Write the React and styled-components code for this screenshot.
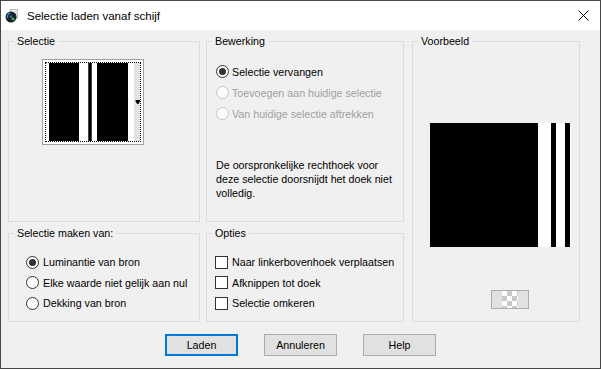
import React from 'react';
import styled, { createGlobalStyle } from 'styled-components';

const GlobalStyle = createGlobalStyle`
  body {
    margin: 0;
    font-family: "Liberation Sans", Arial, sans-serif;
    font-size: 10.7px;
    color: #000;
  }
`;

const Window = styled.div`
  width: 601px;
  height: 369px;
  box-sizing: border-box;
  border: 1px solid #474747;
  background: #f0f0f0;
  display: flex;
  flex-direction: column;
`;

const TitleBar = styled.div`
  height: 29px;
  background: #fff;
  display: flex;
  align-items: center;
  padding-left: 4px;
`;

const Title = styled.span`
  font-size: 11.5px;
  margin-left: 9px;
  margin-top: 1px;
`;

const CloseButton = styled.div`
  margin-left: auto;
  width: 34px;
  height: 29px;
  display: flex;
  align-items: center;
  justify-content: center;
`;

const Body = styled.div`
  display: flex;
  padding: 11px 0 0 7px;
`;

const Column = styled.div`
  display: flex;
  flex-direction: column;
  gap: 11px;
  width: ${(p) => p.$w}px;
  margin-left: ${(p) => p.$ml || 0}px;
`;

const Group = styled.div`
  box-sizing: border-box;
  border: 1px solid #dcdcdc;
  height: ${(p) => p.$h}px;
  width: ${(p) => (p.$w ? `${p.$w}px` : 'auto')};
  margin-left: ${(p) => p.$ml || 0}px;
  display: flex;
  flex-direction: column;
  align-items: flex-start;
`;

const Legend = styled.span`
  margin-top: -8px;
  margin-left: 5px;
  padding: 0 3px;
  line-height: 14px;
  background: #f0f0f0;
`;

const ThumbFrame = styled.div`
  margin: 11px 0 0 33px;
  width: 102px;
  height: 86px;
  box-sizing: border-box;
  border: 1px solid #a0a0a0;
  background: #fff;
  padding: 2px;
`;

const FocusRect = styled.div`
  width: 100%;
  height: 100%;
  box-sizing: border-box;
  border: 1px dotted #000;
  display: flex;
`;

const OptionList = styled.div`
  display: flex;
  flex-direction: column;
  margin-top: ${(p) => p.$mt}px;
  padding-left: ${(p) => p.$pl}px;
`;

const OptionRow = styled.div`
  display: flex;
  align-items: center;
  height: ${(p) => p.$h}px;
  gap: ${(p) => p.$gap}px;
  color: ${(p) => (p.$disabled ? '#a0a0a0' : '#000')};
  white-space: nowrap;
`;

const RadioDot = styled.span`
  width: 13px;
  height: 13px;
  box-sizing: border-box;
  border-radius: 50%;
  border: 1px solid ${(p) => (p.$disabled ? '#c6c6c6' : '#333')};
  background: ${(p) => (p.$disabled ? '#fbfbfb' : '#fff')};
  display: flex;
  align-items: center;
  justify-content: center;
  flex-shrink: 0;

  &::after {
    content: '';
    width: 7px;
    height: 7px;
    border-radius: 50%;
    background: #333;
    display: ${(p) => (p.$checked ? 'block' : 'none')};
  }
`;

const CheckBox = styled.span`
  width: 13px;
  height: 13px;
  box-sizing: border-box;
  border: 1px solid #333;
  background: #fff;
  flex-shrink: 0;
`;

const Note = styled.p`
  margin: 34px 0 0 9px;
  line-height: 14px;
`;

const Preview = styled.div`
  margin: 75px 0 0 17px;
  width: 141px;
  height: 124px;
  display: flex;
`;

const ChequerButton = styled.div`
  margin: 43px 0 0 78px;
  width: 38px;
  height: 19px;
  box-sizing: border-box;
  border: 1px solid #adadad;
  background: #e1e1e1;
  display: flex;
  justify-content: center;
`;

const Chequer = styled.span`
  width: 16px;
  height: 17px;
  background: repeating-conic-gradient(#c9c9c9 0 25%, #fff 0 50%) 0 0 / 10px 10px;
`;

const ButtonRow = styled.div`
  display: flex;
  justify-content: center;
  gap: 26px;
  margin-top: 12px;
`;

const Button = styled.div`
  width: 73px;
  height: 22px;
  box-sizing: border-box;
  border: ${(p) => (p.$default ? '2px solid #0078d7' : '1px solid #adadad')};
  background: #e1e1e1;
  display: flex;
  align-items: center;
  justify-content: center;
`;

const AppIcon = () => (
  <svg width="13" height="14" viewBox="0 0 13 14">
    <rect x="5" y="0.5" width="7.5" height="9" fill="#e8e8e8" stroke="#9a9a9a" strokeWidth="0.6" />
    <circle cx="6" cy="8" r="5.5" fill="#17202b" />
    <path d="M2.5 9 A4 4 0 0 1 5 4" stroke="#2d8fd0" strokeWidth="1.4" fill="none" />
    <circle cx="8" cy="10" r="1.5" fill="#3fa845" />
    <circle cx="6" cy="7.5" r="1.2" fill="#5a6b80" />
  </svg>
);

const CloseIcon = () => (
  <svg width="11" height="11" viewBox="0 0 11 11">
    <path d="M0.5 0.5 L10.5 10.5 M10.5 0.5 L0.5 10.5" stroke="#000" strokeWidth="1" />
  </svg>
);

const SelectionThumb = () => (
  <svg width="94" height="78" viewBox="0 0 94 78">
    <rect x="3" y="0" width="30" height="78" fill="#000" />
    <rect x="42" y="0" width="4" height="78" fill="#000" />
    <rect x="42" y="0" width="1" height="78" fill="#444" />
    <rect x="45" y="0" width="1" height="78" fill="#444" />
    <rect x="51" y="0" width="31" height="78" fill="#000" />
    <rect x="88" y="0" width="6" height="78" fill="#e3e3e3" />
    <path d="M89.5 37.5 H94 M90 38.5 L93.5 38.5 L91.75 41 Z" stroke="#000" strokeWidth="1" fill="#000" />
  </svg>
);

const PreviewImage = () => (
  <svg width="141" height="124" viewBox="0 0 141 124">
    <rect x="0" y="0" width="141" height="124" fill="#fff" />
    <rect x="0" y="0" width="108" height="124" fill="#000" />
    <rect x="121" y="0" width="5" height="124" fill="#000" />
    <rect x="135" y="0" width="5" height="124" fill="#000" />
  </svg>
);

const Radio = ({ label, checked, disabled, h, gap }) => (
  <OptionRow $h={h} $gap={gap} $disabled={disabled}>
    <RadioDot $checked={checked} $disabled={disabled} />
    {label}
  </OptionRow>
);

const Check = ({ label }) => (
  <OptionRow $h={20.5} $gap={4}>
    <CheckBox />
    {label}
  </OptionRow>
);

export default function App() {
  return (
    <>
      <GlobalStyle />
      <Window>
        <TitleBar>
          <AppIcon />
          <Title>Selectie laden vanaf schijf</Title>
          <CloseButton>
            <CloseIcon />
          </CloseButton>
        </TitleBar>

        <Body>
          <Column $w={192}>
            <Group $h={181}>
              <Legend>Selectie</Legend>
              <ThumbFrame>
                <FocusRect>
                  <SelectionThumb />
                </FocusRect>
              </ThumbFrame>
            </Group>
            <Group $h={89}>
              <Legend>Selectie maken van:</Legend>
              <OptionList $mt={12} $pl={17}>
                <Radio label="Luminantie van bron" checked h={20.5} gap={4} />
                <Radio label="Elke waarde niet gelijk aan nul" h={20.5} gap={4} />
                <Radio label="Dekking van bron" h={20.5} gap={4} />
              </OptionList>
            </Group>
          </Column>

          <Column $w={198} $ml={6}>
            <Group $h={181}>
              <Legend>Bewerking</Legend>
              <OptionList $mt={13} $pl={9}>
                <Radio label="Selectie vervangen" checked h={21} gap={3} />
                <Radio label="Toevoegen aan huidige selectie" disabled h={21} gap={3} />
                <Radio label="Van huidige selectie aftrekken" disabled h={21} gap={3} />
              </OptionList>
              <Note>
                De oorspronkelijke rechthoek voor
                <br />
                deze selectie doorsnijdt het doek niet
                <br />
                volledig.
              </Note>
            </Group>
            <Group $h={89}>
              <Legend>Opties</Legend>
              <OptionList $mt={12} $pl={8}>
                <Check label="Naar linkerbovenhoek verplaatsen" />
                <Check label="Afknippen tot doek" />
                <Check label="Selectie omkeren" />
              </OptionList>
            </Group>
          </Column>

          <Group $h={281} $w={168} $ml={8}>
            <Legend>Voorbeeld</Legend>
            <Preview>
              <PreviewImage />
            </Preview>
            <ChequerButton>
              <Chequer />
            </ChequerButton>
          </Group>
        </Body>

        <ButtonRow>
          <Button $default>Laden</Button>
          <Button>Annuleren</Button>
          <Button>Help</Button>
        </ButtonRow>
      </Window>
    </>
  );
}
